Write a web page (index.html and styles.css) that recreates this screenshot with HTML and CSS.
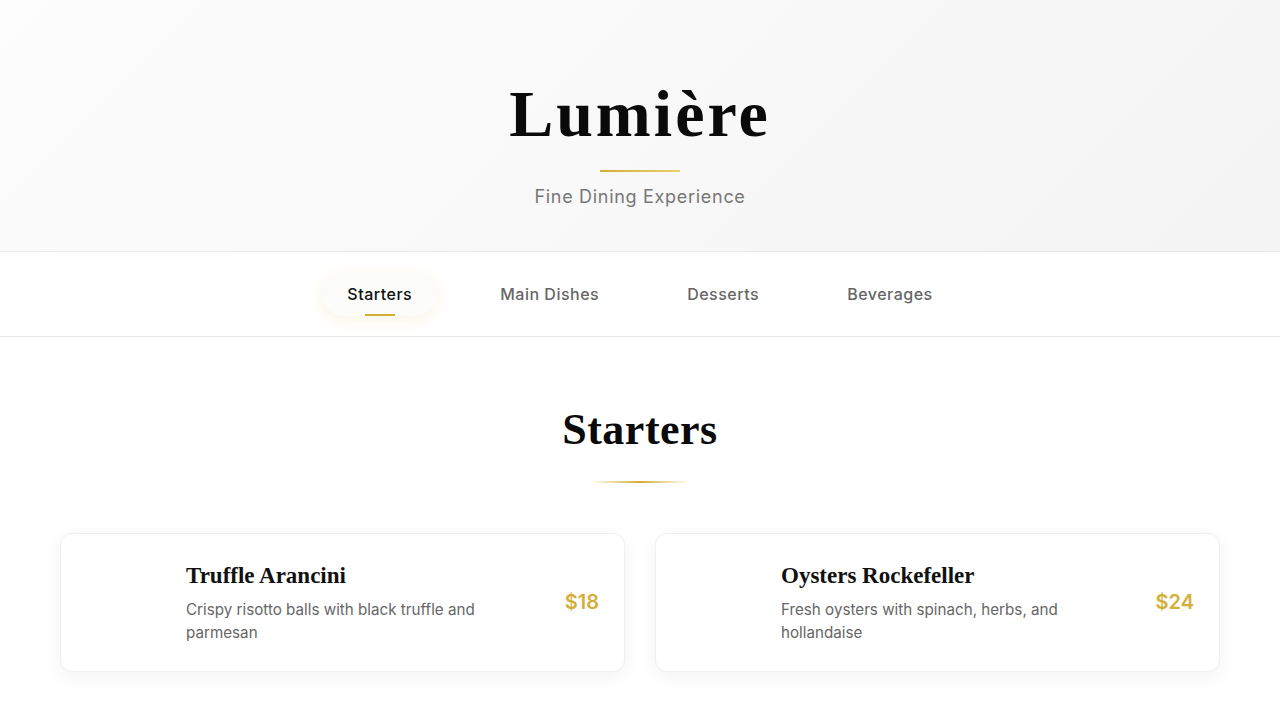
FILE: index.html
```html
<!DOCTYPE html>
<html lang="en">
<head>
<meta charset="utf-8">
<title>Lumière</title>
<link rel="stylesheet" href="styles.css">
</head>
<body>
<header class="hero">
  <h1 class="brand">Lumière</h1>
  <div class="brand-rule"></div>
  <p class="tagline">Fine Dining Experience</p>
</header>
<nav class="tabs">
  <button class="tab active">Starters</button>
  <button class="tab">Main Dishes</button>
  <button class="tab">Desserts</button>
  <button class="tab">Beverages</button>
</nav>
<main class="menu">
  <h2 class="section-title">Starters</h2>
  <div class="section-rule"></div>
  <div class="grid">
    <article class="item">
      <div class="thumb"></div>
      <div class="info">
        <h3 class="name">Truffle Arancini</h3>
        <p class="desc">Crispy risotto balls with black truffle and parmesan</p>
      </div>
      <div class="price">$18</div>
    </article>
    <article class="item">
      <div class="thumb"></div>
      <div class="info">
        <h3 class="name">Oysters Rockefeller</h3>
        <p class="desc">Fresh oysters with spinach, herbs, and hollandaise</p>
      </div>
      <div class="price">$24</div>
    </article>
  </div>
</main>
</body>
</html>
```
FILE: styles.css
```css
* { box-sizing: border-box; }
html, body { margin: 0; padding: 0; }
body {
  background: #ffffff;
  font-family: Inter, "Noto Sans", sans-serif;
  color: #1a1a1a;
}
.hero {
  background: linear-gradient(135deg, #fdfdfd 0%, #f4f4f4 100%);
  padding: 74px 0 41px;
  text-align: center;
  border-bottom: 1px solid #e8e8e8;
}
.brand {
  margin: 0;
  font-family: "Liberation Serif", "Times New Roman", serif;
  font-weight: 700;
  font-size: 66px;
  line-height: 1.2;
  letter-spacing: 3px;
  color: #0a0a0a;
}
.brand-rule {
  width: 80px;
  height: 2px;
  margin: 17px auto 0;
  background: linear-gradient(90deg, #d4af37, #e9cf6a);
}
.tagline {
  margin: 11px 0 0;
  font-size: 18px;
  line-height: 1.5;
  letter-spacing: 0.7px;
  color: #777777;
}
.tabs {
  display: flex;
  justify-content: center;
  gap: 38px;
  padding: 20px 0;
  background: #ffffff;
  border-bottom: 1px solid #eaeaea;
}
.tab {
  position: relative;
  border: none;
  background: transparent;
  font-family: Inter, "Noto Sans", sans-serif;
  font-size: 16px;
  font-weight: 500;
  line-height: 24px;
  letter-spacing: 0.5px;
  padding: 10px 25px;
  border-radius: 22px;
  color: #666666;
  cursor: pointer;
}
.tab.active {
  color: #111111;
  background: #fcfcfb;
  box-shadow: 0 4px 16px rgba(212, 175, 55, 0.14);
}
.tab.active::after {
  content: "";
  position: absolute;
  left: 50%;
  bottom: 0;
  width: 30px;
  height: 2px;
  margin-left: -15px;
  background: #d4af37;
}
.menu {
  padding: 67px 60px 40px;
  text-align: center;
}
.section-title {
  margin: 0;
  font-family: "Liberation Serif", "Times New Roman", serif;
  font-weight: 700;
  font-size: 44px;
  line-height: 1.2;
  letter-spacing: 0.5px;
  color: #0a0a0a;
}
.section-rule {
  width: 100px;
  height: 2px;
  margin: 24px auto 0;
  background: linear-gradient(90deg, rgba(212,175,55,0), #d4af37 50%, rgba(212,175,55,0));
}
.grid {
  margin-top: 50px;
  display: grid;
  grid-template-columns: 1fr 1fr;
  gap: 30px;
  text-align: left;
}
.item {
  display: flex;
  align-items: center;
  gap: 20px;
  padding: 26px 25px;
  background: #ffffff;
  border: 1px solid #f0f0f0;
  border-radius: 12px;
  box-shadow: 0 5px 20px rgba(0, 0, 0, 0.05);
}
.thumb {
  flex: 0 0 80px;
  height: 80px;
}
.info { flex: 1; }
.name {
  margin: 0 0 7px;
  font-family: "Liberation Serif", "Times New Roman", serif;
  font-weight: 700;
  font-size: 23px;
  line-height: 32px;
  color: #111111;
}
.desc {
  margin: 0;
  font-size: 15.2px;
  line-height: 22.8px;
  color: #666666;
}
.price {
  font-size: 20px;
  font-weight: 600;
  color: #d4af37;
}
```
